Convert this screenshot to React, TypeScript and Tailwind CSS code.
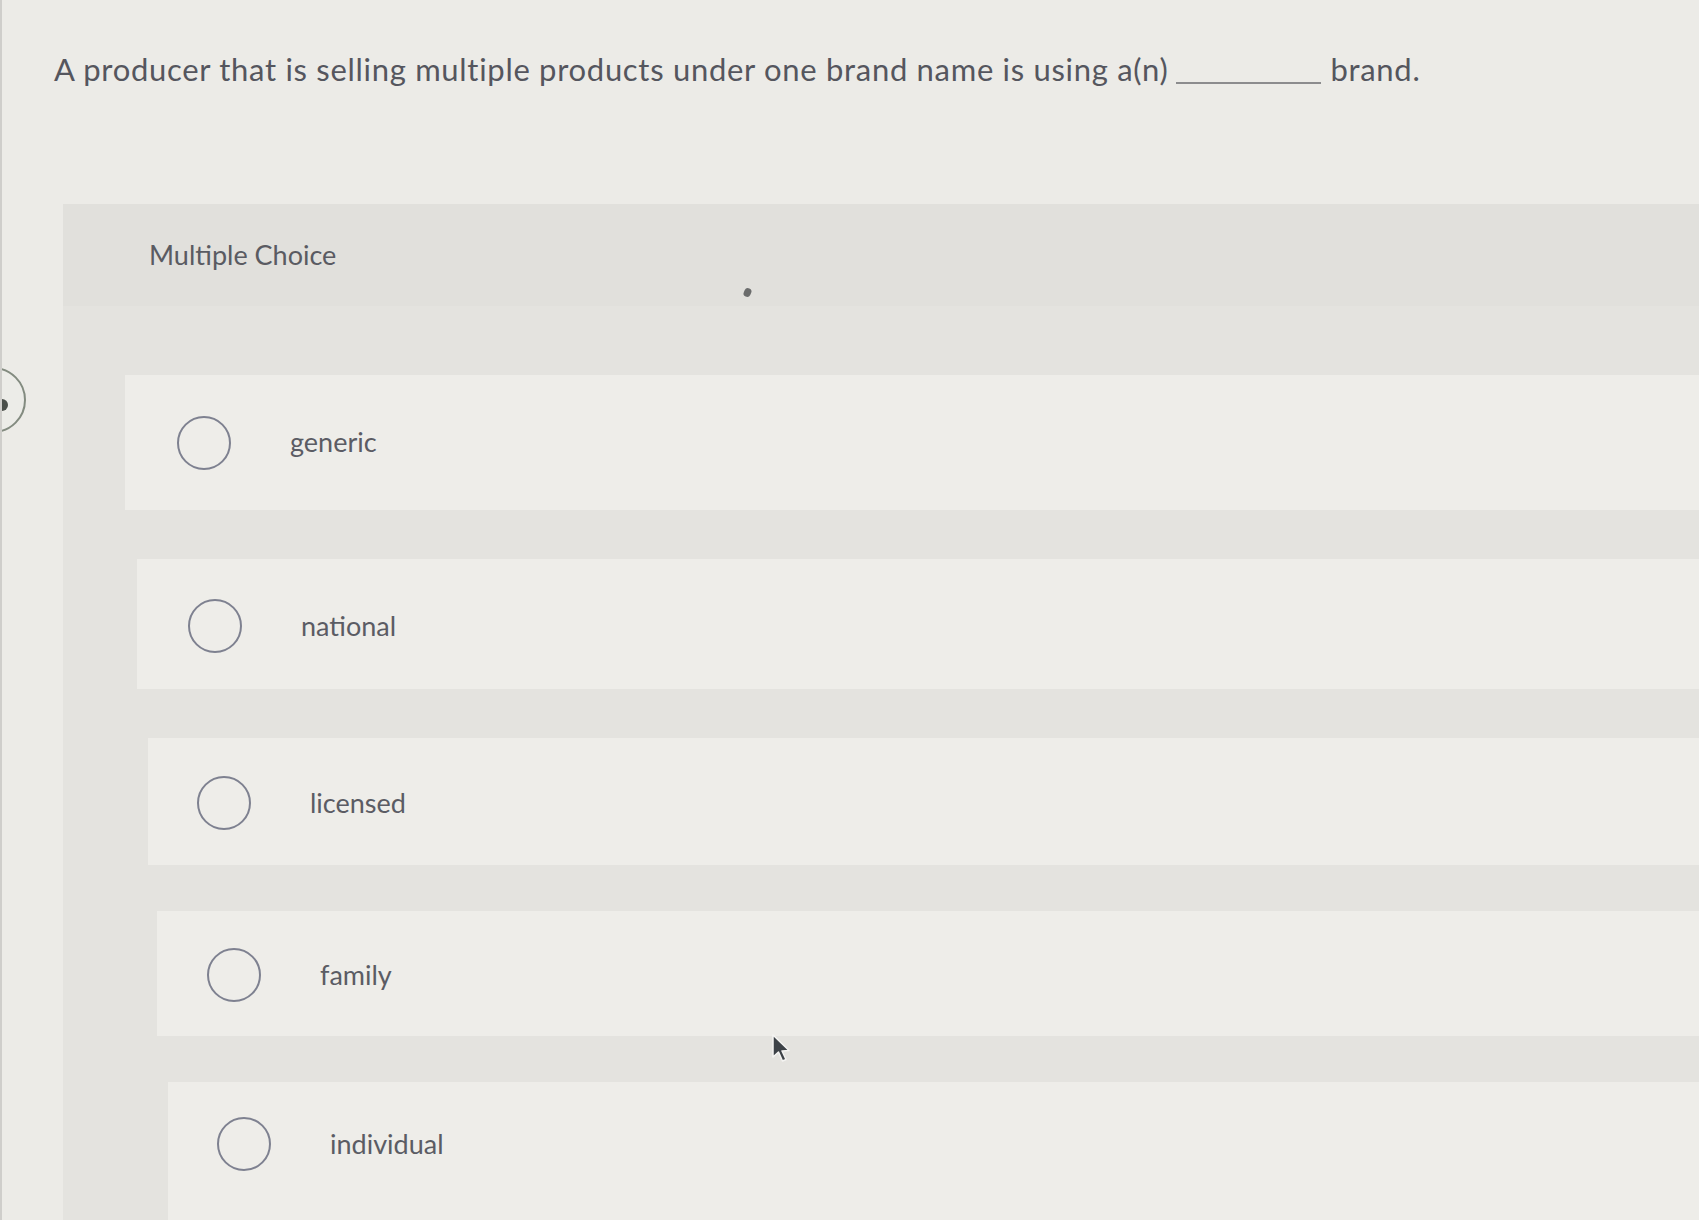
import React from "react";

const options = [
  { label: "generic", card: "ml-[62px] h-[135px] mb-[49px]", dot: "ml-[52px]" },
  { label: "national", card: "ml-[74px] h-[130px] mb-[49px] pt-[4px]", dot: "ml-[51px]" },
  { label: "licensed", card: "ml-[85px] h-[127px] mb-[46px] pt-[3px]", dot: "ml-[49px]" },
  { label: "family", card: "ml-[94px] h-[125px] mb-[46px] pt-[3px]", dot: "ml-[50px]" },
  { label: "individual", card: "ml-[105px] h-[140px] pb-[16px]", dot: "ml-[49px]" },
];

function Cursor() {
  return (
    <svg width="22" height="32" viewBox="0 0 22 32" className="absolute left-[768px] top-[1033px] blur-[0.6px]">
      <path
        d="M3 2 L3 24 L8.5 19 L12.5 28 L16 26.5 L12 18 L19 17.5 Z"
        fill="#3d4247"
        stroke="#f4f4f2"
        strokeWidth="1.5"
        strokeLinejoin="round"
      />
    </svg>
  );
}

export default function App() {
  return (
    <div className="relative w-full h-[1220px] overflow-hidden bg-[#ecebe7] font-['Lato',sans-serif] text-[#55565e] border-l-2 border-[#cfcecb]">
      {/* Question */}
      <div className="pt-[51px] pl-[52px] text-[31px] leading-[36px] tracking-[0.7px] whitespace-nowrap">
        A producer that is selling multiple products under one brand name is using a(n)
        <span className="inline-block w-[145px] ml-[8px] mr-[9px] border-b-2 border-[#8c8c8e] align-[-3px]" />
        brand.
      </div>

      {/* Panel */}
      <div className="ml-[61px] mt-[117px] bg-[#e4e3df]">
        <div className="h-[102px] bg-[#e1e0dc] flex items-center pl-[86px]">
          <span className="text-[27px] text-[#5a5b62]">Multiple Choice</span>
        </div>

        <div className="pt-[69px] flex flex-col">
          {options.map((o) => (
            <div key={o.label} className={`${o.card} bg-[#eeede9] flex items-center`}>
              <span className={`${o.dot} w-[54px] h-[54px] rounded-full border-2 border-[#7e8190] shrink-0`} />
              <span className="ml-[59px] text-[27px] text-[#5b5c64]">{o.label}</span>
            </div>
          ))}
        </div>
      </div>

      {/* partially visible bubble at left edge */}
      <div className="absolute left-[-42px] top-[367px] w-[66px] h-[66px] rounded-full border-2 border-[#838b80] bg-[#ecece8]">
        <span className="absolute left-[40px] top-[30px] w-[6px] h-[12px] rounded-r-full bg-[#4a4f4a]" />
      </div>

      {/* dust speck */}
      <span className="absolute left-[742px] top-[288px] w-[7px] h-[9px] rounded-full bg-[#6b6c6c] rotate-[25deg]" />

      <Cursor />
    </div>
  );
}
